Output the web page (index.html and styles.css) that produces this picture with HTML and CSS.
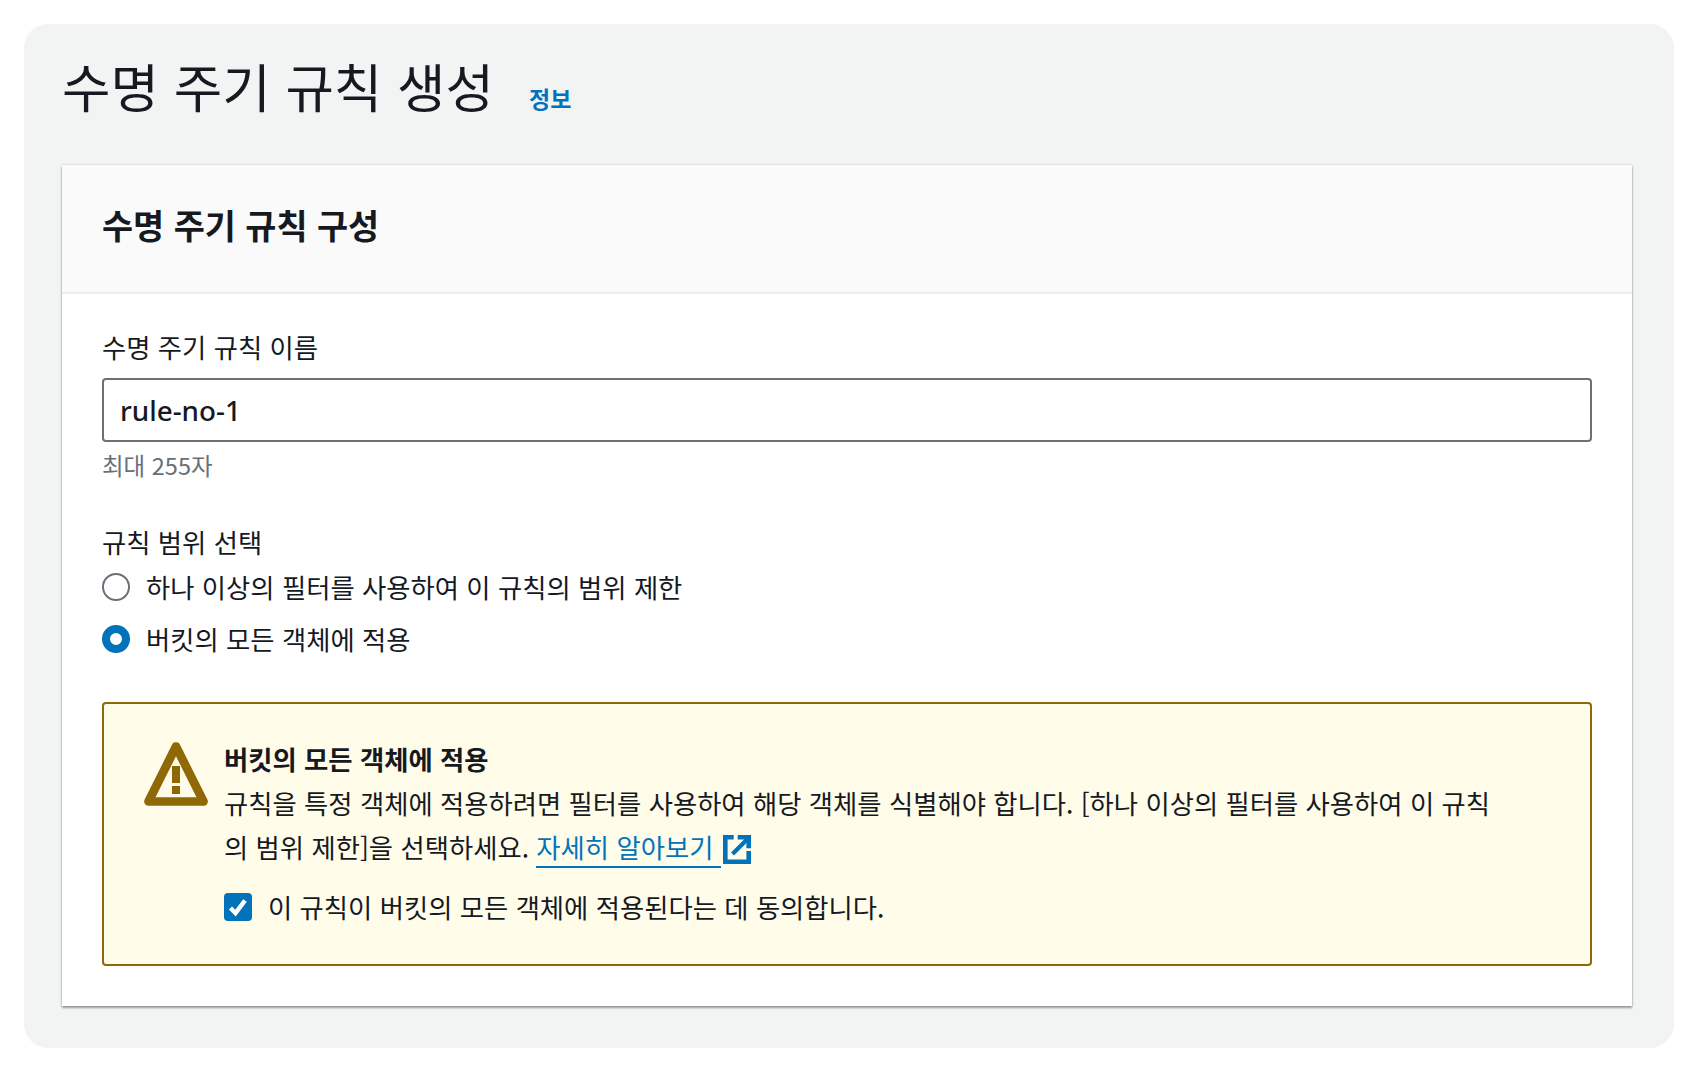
FILE: index.html
```html
<!DOCTYPE html>
<html lang="ko">
<head>
<meta charset="utf-8">
<title>수명 주기 규칙 생성</title>
<link rel="stylesheet" href="styles.css">
</head>
<body>
<main class="panel">
  <header class="page-head">
    <h1 class="page-title">수명 주기 규칙 생성</h1>
    <a class="info-link">정보</a>
  </header>
  <section class="card">
    <div class="card-head">
      <h2 class="card-title">수명 주기 규칙 구성</h2>
    </div>
    <div class="card-body">
      <div class="field">
        <div class="label">수명 주기 규칙 이름</div>
        <div class="input">rule-no-1</div>
        <div class="hint">최대 255자</div>
      </div>
      <div class="scope">
        <div class="label">규칙 범위 선택</div>
        <div class="radio-row">
          <span class="radio"></span>
          <span>하나 이상의 필터를 사용하여 이 규칙의 범위 제한</span>
        </div>
        <div class="radio-row second">
          <span class="radio checked"></span>
          <span>버킷의 모든 객체에 적용</span>
        </div>
      </div>
      <div class="alert">
        <svg class="alert-icon" viewBox="0 0 64 64" width="64" height="64" aria-hidden="true">
          <path d="M32 4.5 L59.5 59.5 H4.5 Z" fill="none" stroke="#906806" stroke-width="8.7" stroke-linejoin="round"/>
          <rect x="28" y="24" width="8" height="17" fill="#906806"/>
          <rect x="28" y="44" width="8" height="8" fill="#906806"/>
        </svg>
        <div class="alert-content">
          <div class="alert-title">버킷의 모든 객체에 적용</div>
          <p class="alert-text">규칙을 특정 객체에 적용하려면 필터를 사용하여 해당 객체를 식별해야 합니다. [하나 이상의 필터를 사용하여 이 규칙의 범위 제한]을 선택하세요. <a class="learn"><span>자세히 알아보기</span><svg class="ext" viewBox="0 0 28 29" width="28" height="29" aria-hidden="true"><path d="M10.7 2.3 H2.3 V26.7 H25.7 V16" fill="none" stroke="#0073bb" stroke-width="4.6"/><path d="M9.5 19 L25 3.5" fill="none" stroke="#0073bb" stroke-width="4.2"/><path d="M14.7 2.3 H25.7 V13.3" fill="none" stroke="#0073bb" stroke-width="4.6"/></svg></a></p>
          <div class="check-row">
            <svg class="check" viewBox="0 0 28 28" width="28" height="28" aria-hidden="true">
              <rect width="28" height="28" rx="4" fill="#0073bb"/>
              <path d="M6.5 15 L11.5 20 L21 7.5" fill="none" stroke="#fff" stroke-width="4.5"/>
            </svg>
            <span>이 규칙이 버킷의 모든 객체에 적용된다는 데 동의합니다.</span>
          </div>
        </div>
      </div>
    </div>
  </section>
</main>
</body>
</html>
```
FILE: styles.css
```css
* { box-sizing: border-box; }
html, body { height: 100%; }
body {
  margin: 0;
  padding: 24px;
  background: #fff;
  color: #16191f;
  font-family: "Noto Sans CJK KR", "Noto Sans", sans-serif;
  font-size: 26.35px;
  line-height: 44px;
}
.panel {
  height: 1024px;
  padding: 0 42px 0 38px;
  background: #f2f3f3;
  border-radius: 24px;
}
.page-head {
  display: flex;
  align-items: baseline;
  height: 141px;
  padding-top: 29px;
}
.page-title {
  margin: 0;
  font-size: 52.7px;
  font-weight: 400;
  line-height: 64px;
}
.info-link {
  margin-left: 35px;
  color: #0073bb;
  font-size: 23px;
  font-weight: 700;
}
.card {
  height: 841px;
  background: #fff;
  box-shadow: 0 2px 2px rgba(84, 91, 100, .55), 0 0 2px rgba(84, 91, 100, .35);
}
.card-head {
  height: 129px;
  padding: 36px 40px 0;
  background: #fafafa;
  border-bottom: 2px solid #eaeded;
}
.card-title {
  margin: 0;
  font-size: 33.8px;
  font-weight: 700;
  line-height: 48px;
}
.card-body { padding: 31px 40px 0; }
.label { line-height: 44px; }
.input {
  height: 64px;
  margin-top: 9px;
  padding: 0 16px;
  border: 2px solid #687078;
  border-radius: 4px;
  font-family: "Noto Sans", sans-serif;
  font-size: 27.8px;
  font-weight: 500;
  line-height: 60px;
}
.hint {
  margin-top: 5px;
  color: #687078;
  font-size: 23.5px;
  line-height: 36px;
}
.scope { margin-top: 37px; }
.radio-row {
  display: flex;
  align-items: center;
  gap: 16px;
  margin-top: 1px;
}
.radio-row.second { margin-top: 8px; }
.radio {
  flex: none;
  width: 28px;
  height: 28px;
  border: 2px solid #687078;
  border-radius: 50%;
  background: #fff;
}
.radio.checked { border: 8px solid #0073bb; }
.alert {
  display: flex;
  height: 264px;
  margin-top: 41px;
  padding: 38px 80px 0 40px;
  background: #fffce9;
  border: 2px solid #906806;
  border-radius: 4px;
}
.alert-icon { flex: none; margin-right: 16px; }
.alert-content { min-width: 0; flex: 1; margin-top: -5px; }
.alert-title { font-weight: 700; }
.alert-text { margin: 0; }
.learn { color: #0073bb; }
.learn span { border-bottom: 2px solid #0073bb; padding-right: 8px; }
.ext { margin-left: 2px; vertical-align: -6px; }
.check-row {
  display: flex;
  align-items: center;
  gap: 16px;
  margin-top: 16px;
}
.check { flex: none; }
```
